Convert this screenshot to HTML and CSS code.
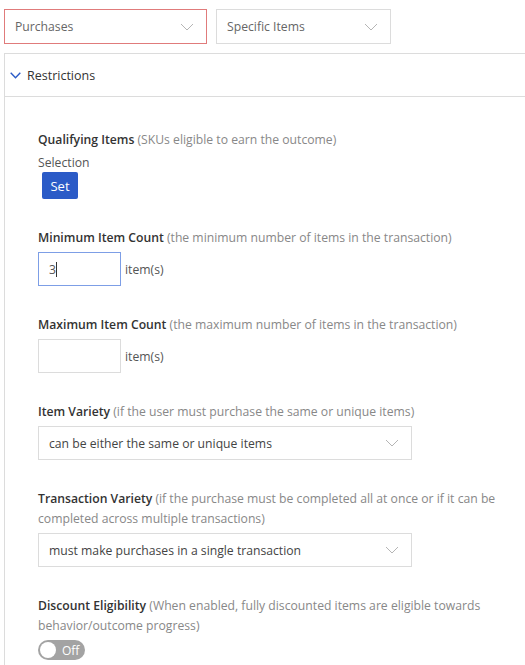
FILE: index.html
```html
<!DOCTYPE html>
<html lang="en">

<head>
    <meta charset="UTF-8">
    <meta name="viewport" content="width=device-width, initial-scale=1.0">
    <title>Restrictions</title>
    <link rel="stylesheet" href="styles.css">
</head>

<body>
    <div class="filters">
        <div class="dropdown invalid purchases">
            <span>Purchases</span>
            <svg class="chevron" width="14" height="8" viewBox="0 0 14 8"><path d="M1 1 L7 7 L13 1" /></svg>
        </div>
        <div class="dropdown items">
            <span>Specific Items</span>
            <svg class="chevron" width="14" height="8" viewBox="0 0 14 8"><path d="M1 1 L7 7 L13 1" /></svg>
        </div>
    </div>

    <div class="panel">
        <div class="panel-header">
            <svg class="toggle-icon" width="11" height="7" viewBox="0 0 11 7"><path d="M0.7 0.7 L5.5 5.8 L10.3 0.7" /></svg>
            <span>Restrictions</span>
        </div>
        <div class="panel-body">
            <div class="field">
                <div class="label"><b>Qualifying Items</b> <span>(SKUs eligible to earn the outcome)</span></div>
                <div class="sublabel">Selection</div>
                <button class="btn-set">Set</button>
            </div>

            <div class="field">
                <div class="label"><b>Minimum Item Count</b> <span>(the minimum number of items in the transaction)</span></div>
                <div class="count-row">
                    <div class="count-input focused">3<span class="caret"></span></div>
                    <span>item(s)</span>
                </div>
            </div>

            <div class="field">
                <div class="label"><b>Maximum Item Count</b> <span>(the maximum number of items in the transaction)</span></div>
                <div class="count-row">
                    <div class="count-input"></div>
                    <span>item(s)</span>
                </div>
            </div>

            <div class="field">
                <div class="label"><b>Item Variety</b> <span>(if the user must purchase the same or unique items)</span></div>
                <div class="dropdown wide">
                    <span>can be either the same or unique items</span>
                    <svg class="chevron" width="14" height="8" viewBox="0 0 14 8"><path d="M1 1 L7 7 L13 1" /></svg>
                </div>
            </div>

            <div class="field">
                <div class="label"><b>Transaction Variety</b> <span>(if the purchase must be completed all at once or if it can be completed across multiple transactions)</span></div>
                <div class="dropdown wide">
                    <span>must make purchases in a single transaction</span>
                    <svg class="chevron" width="14" height="8" viewBox="0 0 14 8"><path d="M1 1 L7 7 L13 1" /></svg>
                </div>
            </div>

            <div class="field">
                <div class="label"><b>Discount Eligibility</b> <span>(When enabled, fully discounted items are eligible towards behavior/outcome progress)</span></div>
                <div class="switch">
                    <span class="knob"></span>
                    <span class="switch-text">Off</span>
                </div>
            </div>
        </div>
    </div>
</body>

</html>
```

FILE: styles.css
```css
body {
    font-family: "Open Sans", "Noto Sans", sans-serif;
    font-size: 12.2px;
    color: #333;
    background: #fff;
    margin: 0;
    padding: 9px 0 0 4px;
    box-sizing: border-box;
    height: 100vh;
    display: flex;
    flex-direction: column;
    overflow: hidden;
}

.filters {
    display: flex;
    gap: 9px;
    margin-bottom: 9px;
}

.dropdown {
    display: flex;
    align-items: center;
    justify-content: space-between;
    box-sizing: border-box;
    height: 34px;
    padding: 0 12px 0 10px;
    border: 1px solid #dcdcdc;
    color: #444;
    background: #fff;
}

.filters .dropdown {
    height: 35px;
    color: #666;
}

.dropdown.invalid {
    border-color: #e07b7b;
}

.purchases {
    width: 203px;
}

.items {
    width: 175px;
}

.wide {
    width: 374px;
}

.chevron path {
    fill: none;
    stroke: #b5b5b5;
    stroke-width: 1;
}

.panel {
    flex: 1;
    border-top: 1px solid #dcdcdc;
    border-left: 1px solid #dcdcdc;
}

.panel-header {
    display: flex;
    align-items: center;
    gap: 6px;
    height: 42px;
    padding-left: 5px;
    border-bottom: 1px solid #dcdcdc;
    font-size: 12.5px;
}

.toggle-icon path {
    fill: none;
    stroke: #2b5bc7;
    stroke-width: 1.4;
}

.panel-body {
    padding: 33px 0 0 33px;
    width: 470px;
}

.field {
    margin-bottom: 29px;
}

.label {
    line-height: 20px;
    color: #888;
    margin-bottom: 4px;
}

.label b {
    color: #333;
    font-weight: 600;
}

.sublabel {
    line-height: 18px;
    color: #555;
}

.btn-set {
    display: block;
    margin-left: 4px;
    width: 36px;
    height: 27px;
    border: none;
    border-radius: 2px;
    background: #2b5bc7;
    color: #fff;
    font-family: inherit;
    font-size: 13px;
    padding: 0;
}

.count-row {
    display: flex;
    align-items: center;
    gap: 4px;
    color: #555;
}

.count-input {
    display: flex;
    align-items: center;
    box-sizing: border-box;
    width: 83px;
    height: 34px;
    padding-left: 10px;
    border: 1px solid #dcdcdc;
    color: #555;
}

.count-input.focused {
    border-color: #7d9ee6;
}

.caret {
    width: 1px;
    height: 15px;
    background: #333;
}

.switch {
    display: flex;
    align-items: center;
    width: 47px;
    height: 20px;
    border-radius: 10px;
    background: #a3a3a3;
}

.knob {
    width: 16px;
    height: 16px;
    border-radius: 50%;
    background: #fff;
    margin-left: 2px;
}

.switch-text {
    color: #fff;
    font-size: 12px;
    margin-left: 6px;
}
```
